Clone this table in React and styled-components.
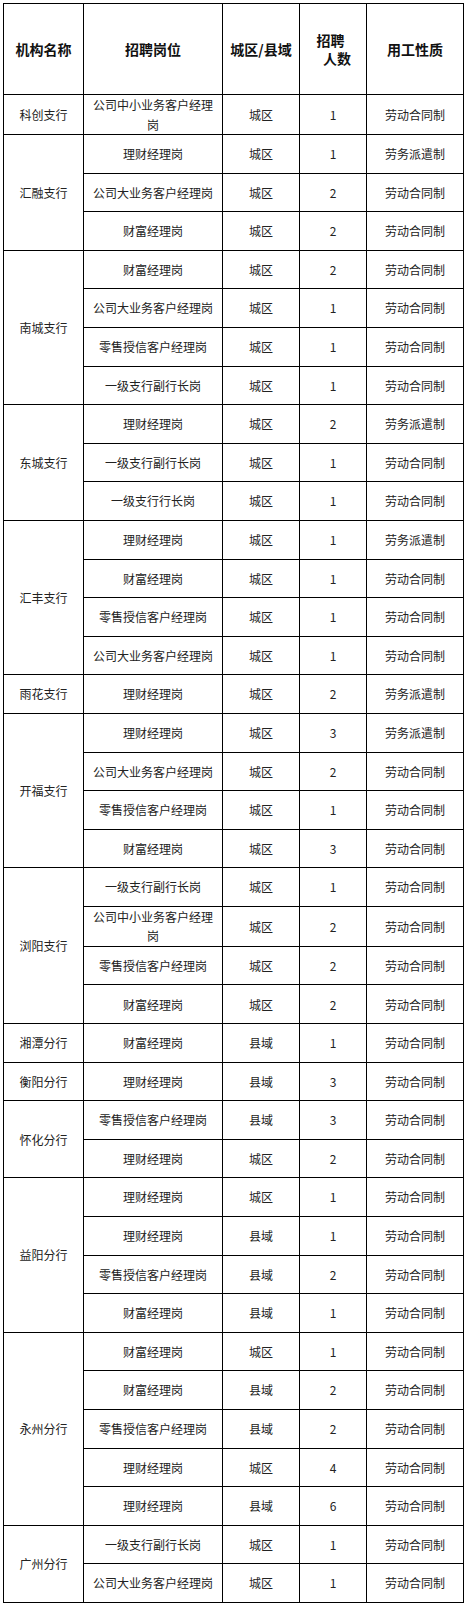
import React from "react";
import styled, { createGlobalStyle } from "styled-components";

const GlobalStyle = createGlobalStyle`
  html, body {
    margin: 0;
    padding: 0;
    background: #fff;
  }
  body {
    font-family: "Noto Sans CJK SC", "Noto Sans", sans-serif;
  }
`;

const Page = styled.div`
  padding: 3px;
  background: #fff;
`;

const Table = styled.table`
  width: 460px;
  border-collapse: collapse;
  table-layout: fixed;
  border: 1px solid #000;
`;

const HeadCell = styled.th`
  height: 90px;
  padding: 0 4px;
  border: 1px solid #000;
  font-size: 14px;
  font-weight: 700;
  line-height: 18px;
  color: #111;
  text-align: center;
  vertical-align: middle;
`;

const HeadLine = styled.span`
  display: block;
  padding-left: ${(p) => p.$indent || 0}px;
  padding-right: ${(p) => p.$outdent || 0}px;
`;

const Row = styled.tr`
  height: 38.6px;
`;

const Cell = styled.td`
  padding: 0 6px;
  border: 1px solid #000;
  font-size: 12px;
  line-height: 19.5px;
  color: #222;
  text-align: center;
  vertical-align: middle;
  word-break: break-all;
`;

const groups = [
  { name: "科创支行", rows: [["公司中小业务客户经理岗", "城区", 1, "劳动合同制"]] },
  {
    name: "汇融支行",
    rows: [
      ["理财经理岗", "城区", 1, "劳务派遣制"],
      ["公司大业务客户经理岗", "城区", 2, "劳动合同制"],
      ["财富经理岗", "城区", 2, "劳动合同制"],
    ],
  },
  {
    name: "南城支行",
    rows: [
      ["财富经理岗", "城区", 2, "劳动合同制"],
      ["公司大业务客户经理岗", "城区", 1, "劳动合同制"],
      ["零售授信客户经理岗", "城区", 1, "劳动合同制"],
      ["一级支行副行长岗", "城区", 1, "劳动合同制"],
    ],
  },
  {
    name: "东城支行",
    rows: [
      ["理财经理岗", "城区", 2, "劳务派遣制"],
      ["一级支行副行长岗", "城区", 1, "劳动合同制"],
      ["一级支行行长岗", "城区", 1, "劳动合同制"],
    ],
  },
  {
    name: "汇丰支行",
    rows: [
      ["理财经理岗", "城区", 1, "劳务派遣制"],
      ["财富经理岗", "城区", 1, "劳动合同制"],
      ["零售授信客户经理岗", "城区", 1, "劳动合同制"],
      ["公司大业务客户经理岗", "城区", 1, "劳动合同制"],
    ],
  },
  { name: "雨花支行", rows: [["理财经理岗", "城区", 2, "劳务派遣制"]] },
  {
    name: "开福支行",
    rows: [
      ["理财经理岗", "城区", 3, "劳务派遣制"],
      ["公司大业务客户经理岗", "城区", 2, "劳动合同制"],
      ["零售授信客户经理岗", "城区", 1, "劳动合同制"],
      ["财富经理岗", "城区", 3, "劳动合同制"],
    ],
  },
  {
    name: "浏阳支行",
    rows: [
      ["一级支行副行长岗", "城区", 1, "劳动合同制"],
      ["公司中小业务客户经理岗", "城区", 2, "劳动合同制"],
      ["零售授信客户经理岗", "城区", 2, "劳动合同制"],
      ["财富经理岗", "城区", 2, "劳动合同制"],
    ],
  },
  { name: "湘潭分行", rows: [["财富经理岗", "县域", 1, "劳动合同制"]] },
  { name: "衡阳分行", rows: [["理财经理岗", "县域", 3, "劳动合同制"]] },
  {
    name: "怀化分行",
    rows: [
      ["零售授信客户经理岗", "县域", 3, "劳动合同制"],
      ["理财经理岗", "城区", 2, "劳动合同制"],
    ],
  },
  {
    name: "益阳分行",
    rows: [
      ["理财经理岗", "城区", 1, "劳动合同制"],
      ["理财经理岗", "县域", 1, "劳动合同制"],
      ["零售授信客户经理岗", "县域", 2, "劳动合同制"],
      ["财富经理岗", "县域", 1, "劳动合同制"],
    ],
  },
  {
    name: "永州分行",
    rows: [
      ["财富经理岗", "城区", 1, "劳动合同制"],
      ["财富经理岗", "县域", 2, "劳动合同制"],
      ["零售授信客户经理岗", "县域", 2, "劳动合同制"],
      ["理财经理岗", "城区", 4, "劳动合同制"],
      ["理财经理岗", "县域", 6, "劳动合同制"],
    ],
  },
  {
    name: "广州分行",
    rows: [
      ["一级支行副行长岗", "城区", 1, "劳动合同制"],
      ["公司大业务客户经理岗", "城区", 1, "劳动合同制"],
    ],
  },
];

function App() {
  return (
    <Page>
      <GlobalStyle />
      <Table>
        <colgroup>
          <col style={{ width: 80 }} />
          <col style={{ width: 139 }} />
          <col style={{ width: 77 }} />
          <col style={{ width: 67 }} />
          <col style={{ width: 97 }} />
        </colgroup>
        <thead>
          <tr>
            <HeadCell>机构名称</HeadCell>
            <HeadCell>招聘岗位</HeadCell>
            <HeadCell>城区/县域</HeadCell>
            <HeadCell>
              <HeadLine $outdent={5}>招聘</HeadLine>
              <HeadLine $indent={8}>人数</HeadLine>
            </HeadCell>
            <HeadCell>用工性质</HeadCell>
          </tr>
        </thead>
        <tbody>
          {groups.map((g) =>
            g.rows.map((r, i) => (
              <Row key={g.name + i}>
                {i === 0 && <Cell rowSpan={g.rows.length}>{g.name}</Cell>}
                <Cell>{r[0]}</Cell>
                <Cell>{r[1]}</Cell>
                <Cell>{r[2]}</Cell>
                <Cell>{r[3]}</Cell>
              </Row>
            ))
          )}
        </tbody>
      </Table>
    </Page>
  );
}

export default App;
